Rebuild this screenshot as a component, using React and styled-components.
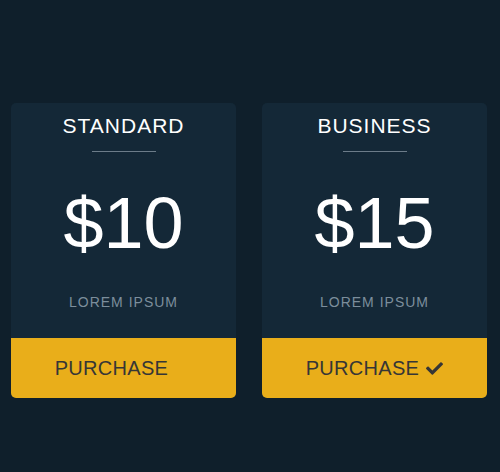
import React from "react";
import styled, { createGlobalStyle } from "styled-components";
import { FaCheck } from "react-icons/fa";

const GlobalStyle = createGlobalStyle`
  html, body {
    margin: 0;
    padding: 0;
    background: #0f1f2b;
    font-family: "Liberation Sans", Arial, sans-serif;
  }
`;

const plans = [
  { name: "STANDARD", price: "$10", note: "LOREM IPSUM", selected: false },
  { name: "BUSINESS", price: "$15", note: "LOREM IPSUM", selected: true },
];

const PlanCard = ({ plan }) => {
  return (
    <Card>
      <Title>{plan.name}</Title>
      <Divider />
      <Price>{plan.price}</Price>
      <Note>{plan.note}</Note>
      <PurchaseButton>
        PURCHASE
        <Check $visible={plan.selected}>
          <FaCheck />
        </Check>
      </PurchaseButton>
    </Card>
  );
};

const App = () => {
  return (
    <>
      <GlobalStyle />
      <Page>
        {plans.map((plan) => (
          <PlanCard key={plan.name} plan={plan} />
        ))}
      </Page>
    </>
  );
};

export default App;

const Page = styled.div`
  width: 500px;
  height: 472px;
  box-sizing: border-box;
  padding: 103px 0 0 11px;
  display: flex;
  align-items: flex-start;
  gap: 26px;
`;

const Card = styled.div`
  width: 225px;
  height: 295px;
  background: #142837;
  border-radius: 5px;
  overflow: hidden;
  display: flex;
  flex-direction: column;
  align-items: center;
`;

const Title = styled.h2`
  margin: 11px 0 0;
  font-size: 21px;
  line-height: 24px;
  font-weight: normal;
  letter-spacing: 1px;
  color: #ffffff;
`;

const Divider = styled.div`
  width: 64px;
  height: 1px;
  margin-top: 13px;
  background: #6c7c89;
`;

const Price = styled.div`
  margin-top: 30px;
  font-size: 72px;
  line-height: 83px;
  color: #ffffff;
`;

const Note = styled.div`
  margin-top: 29px;
  font-size: 14px;
  line-height: 16px;
  letter-spacing: 1px;
  color: #7c8e9c;
`;

const PurchaseButton = styled.button`
  margin-top: auto;
  width: 100%;
  height: 60px;
  border: none;
  background: #e9ae1a;
  color: #363636;
  font-family: inherit;
  font-size: 20px;
  letter-spacing: 0.3px;
  display: flex;
  align-items: center;
  justify-content: center;
  gap: 7px;
  cursor: pointer;
  padding: 0;
`;

const Check = styled.span`
  display: inline-flex;
  font-size: 17px;
  visibility: ${(p) => (p.$visible ? "visible" : "hidden")};
`;
